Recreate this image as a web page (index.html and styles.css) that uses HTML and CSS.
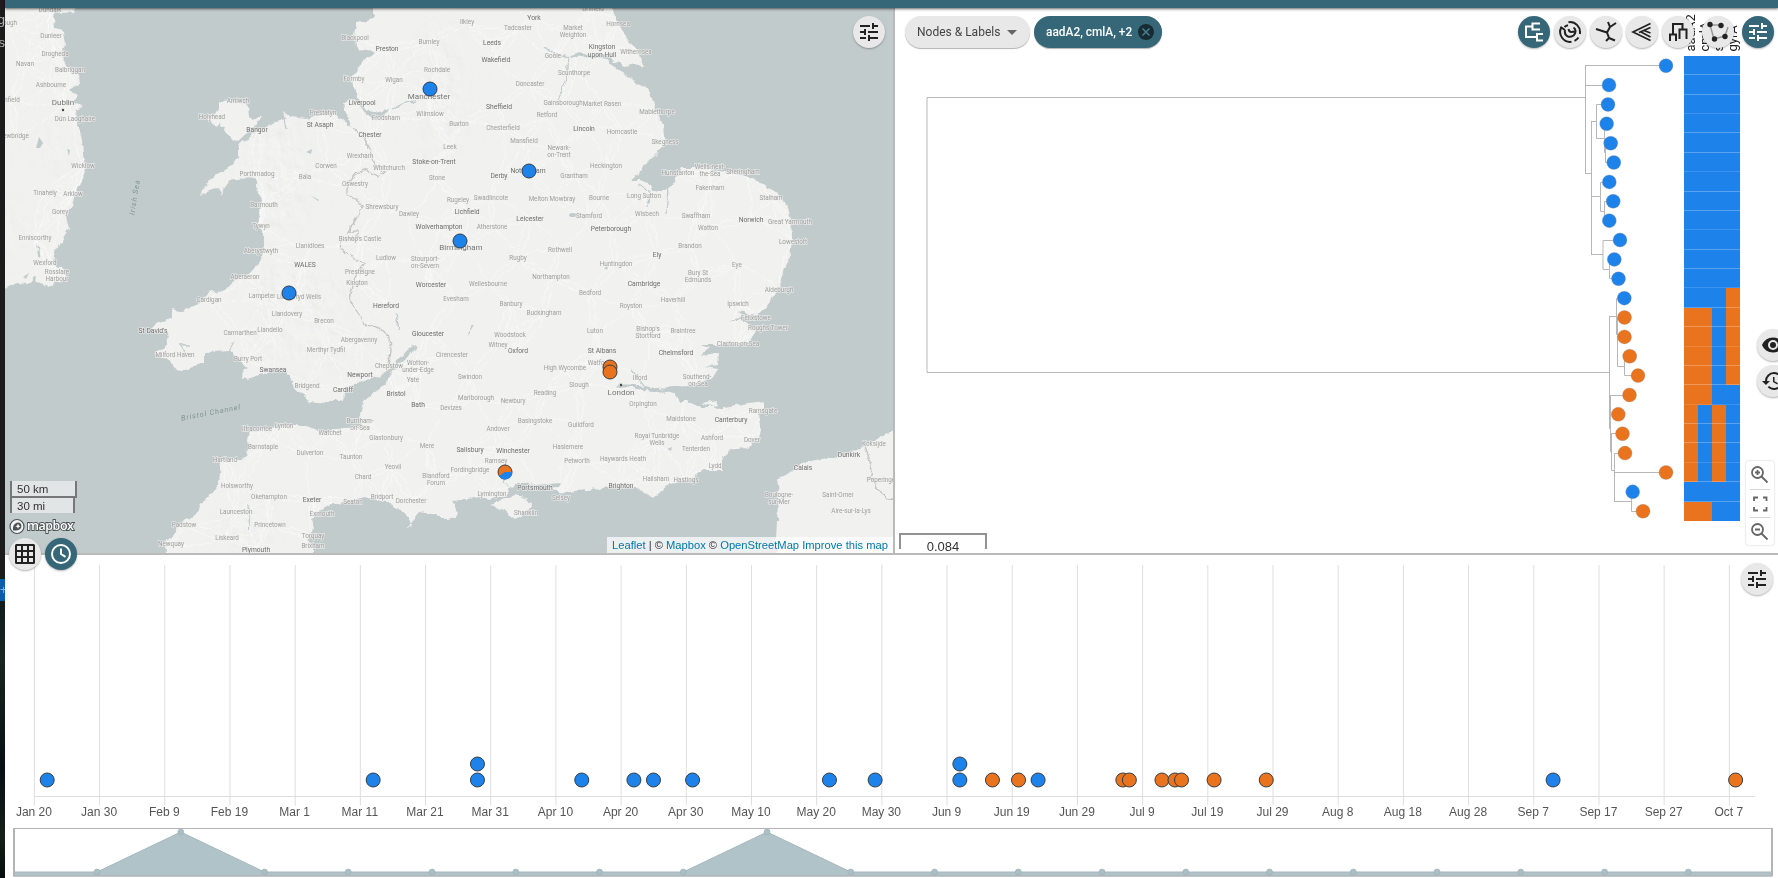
FILE: index.html
```html
<!DOCTYPE html>
<html lang="en">
<head>
<meta charset="utf-8">
<title>Map, tree and timeline</title>
<link rel="stylesheet" href="styles.css">
</head>
<body>
<svg class="defs" width="0" height="0">
  <symbol id="tune" viewBox="0 0 24 24"><path d="M3 17v2h6v-2H3zM3 5v2h10V5H3zm10 16v-2h8v-2h-8v-2h-2v6h2zM7 9v2H3v2h4v2h2V9H7zm14 4v-2H11v2h10zm-6-4h2V7h4V5h-4V3h-2v6z"/></symbol>
</svg>
<div class="screen">
  <aside class="desktop"><span class="bit">ng</span><span class="bit">es</span><i class="accent">+</i><i class="forest"></i></aside>
  <main class="app">
    <header class="topbar"></header>
    <section class="upper">
      <div class="map">
        <svg id="map" class="canvas" viewBox="5 8 888 545" width="888" height="545">
          <defs>
            <filter id="coast" x="0" y="0" width="100%" height="100%"><feTurbulence type="fractalNoise" baseFrequency=".13" numOctaves="3" seed="4"/><feDisplacementMap in="SourceGraphic" scale="6" xChannelSelector="R" yChannelSelector="G"/></filter>
            <filter id="relief" x="0" y="0" width="100%" height="100%"><feTurbulence type="fractalNoise" baseFrequency=".06" numOctaves="4" seed="9"/><feDiffuseLighting surfaceScale="2.2" lighting-color="#fff"><feDistantLight azimuth="135" elevation="62"/></feDiffuseLighting><feComposite in2="SourceAlpha" operator="in"/></filter>
            <filter id="soft"><feGaussianBlur stdDeviation="13"/></filter>
            <clipPath id="onland"><use href="#gb"/><use href="#ireland"/></clipPath>
            <mask id="hills"><g fill="#fff" filter="url(#soft)"><ellipse cx="275" cy="175" rx="32" ry="65"/><ellipse cx="295" cy="290" rx="55" ry="25"/><ellipse cx="310" cy="345" rx="45" ry="22"/><ellipse cx="52" cy="150" rx="14" ry="24"/><ellipse cx="440" cy="90" rx="22" ry="70"/><ellipse cx="250" cy="530" rx="35" ry="16"/><ellipse cx="10" cy="225" rx="14" ry="25"/></g></mask>
          </defs>
          <rect x="5" y="8" width="888" height="545" fill="#c2cbcc"/>
          <g fill="#f1f1f0" filter="url(#coast)">
            <path id="ireland" d="M0 0H74L76 12 62 13 53 10 55 28 64 30 66 45 62 50 66 66 78 75 79 85 70 88 77 95 74 103 81 106 76 109 77 125 82 140 83 155 86 170 80 185 75 195 71 207 66 218 69 228 62 240 54 255 53 264 62 268 67 279 50 286 40 283 34 277 28 284 17 283 0 291Z"/>
            <path id="gb" d="M373 0V12L375 17 366 20 357 22 354 35 355 45 361 51 372 50 376 52 367 58 357 68 351 80 355 90 358 97 365 108 373 113 388 110 385 115 374 119 368 115 360 106 354 99 343 104 347 115 352 127 359 132 350 125 335 114 318 116 306 118 290 116 283 112 285 119 270 124 262 128 255 132 249 138 242 142 238 147 238 158 225 170 213 177 203 190 200 195 212 190 219 189 222 195 226 184 235 179 256 178 259 182 256 190 262 200 260 212 257 225 264 232 264 248 260 262 250 273 235 280 226 290 208 293 197 305 187 308 185 312 172 309 170 318 155 325 150 330 167 332 169 342 164 348 155 353 163 358 172 361 174 369 185 370 195 366 205 363 205 354 212 351 230 350 236 355 243 364 248 368 243 370 242 377 247 379 260 375 271 372 285 371 292 382 294 388 303 395 308 401 325 403 343 399 344 392 352 386 360 382 375 378 390 369 395 362 410 348 416 345 413 352 405 358 398 364 392 372 385 385 375 392 363 402 360 415 362 426 345 427 325 432 305 426 290 426 270 428 250 432 248 440 250 447 246 455 240 460 225 458 220 462 218 485 212 493 200 506 196 516 185 520 178 526 174 535 164 543 165 553V570H313V545L308 538 314 528 312 520 320 510 332 504 352 500 365 497 385 502 400 510 409 518 411 525 407 528 413 520 420 512 437 515 446 519 456 517 457 508 453 501 468 499 480 497 490 499 506 495 510 488 503 481 513 489 516 483 525 483 540 487 557 490 560 494 575 491 600 489 612 486 635 487 645 493 655 497 670 483 690 480 702 470 722 470 722 460 730 450 745 448 758 440 761 430 758 415 764 408 764 402 742 405 718 409 702 403 717 400 719 405 710 407 697 407 687 400 680 403 674 393 658 388 673 387 690 386 700 383 710 378 719 369 704 367 718 366 719 352 700 356 710 348 700 345 720 345 735 343 748 342 756 331 745 321 730 321 745 318 738 311 750 314 757 315 765 308 775 295 781 280 784 268 790 255 792 240 791 220 787 205 777 193 760 182 745 176 725 171 700 168 682 168 676 177 674 185 665 191 652 191 650 184 640 180 631 180 638 175 645 165 655 155 664 147 664 135 663 125 655 108 650 92 643 87 635 83 627 75 617 70 609 60 600 57 585 57 575 56 570 58 576 53 590 55 606 54 613 62 625 66 634 63 645 68 640 55 630 42 622 30 615 18 613 0Z"/>
            <path d="M218 103 228 100 240 102 248 105 249 117 252 120 263 116 258 124 250 128 246 135 238 142 232 138 226 133 220 124 215 126 212 122 205 117 214 116 218 108ZM491 505 502 499 515 494 524 499 533 502 532 507 520 516 515 519 505 512ZM900 426 884 436 865 446 840 456 810 461 798 465 790 473 777 479 779 492 777 520 776 540 777 570H900Z"/>
          </g>
          <g clip-path="url(#onland)"><g mask="url(#hills)"><rect x="5" y="8" width="888" height="545" filter="url(#relief)" class="relief"/></g></g>
          <g clip-path="url(#onland)"><g id="roads" class="roads" filter="url(#coast)"></g></g>
          <g class="rivers" filter="url(#coast)"><path d="M569 57 568 68 565 82 561 93 558 100M570 58 555 54 545 47M632 370 645 388 660 392 672 388M638 185 649 190 648 207M668 188 666 215M390 111 405 103 416 101M504 481 507 476 515 473M399 330 396 312M249 504 250 518 248 530M36 240 39 258M474 325 468 336M284 118 286 130M230 350 234 342M186 354 180 345 190 345"/></g>
          <g class="wide" filter="url(#coast)"><path d="M571 57 577 54 586 57 604 56 611 60 619 69M617 386 632 386 645 389 660 392 673 389"/></g>
          <g class="border" filter="url(#coast)"><path d="M353 128 364 138 372 153 375 165 385 172 379 177 367 169 356 173 347 184 347 194 363 205 355 220 348 234 357 230 357 238 342 240 340 248 352 258 364 263 354 280 350 300 365 325 380 328 390 337 391 350 389 366M865 446 869 458 872 470 870 478 878 488 887 499 893 500"/></g>
          <g class="lakes"><ellipse cx="573" cy="215" rx="4" ry="2"/><path d="m36 148 3-11 4 6-3 5zM67 149l3 1-1 6zM306 152l6-3-1 5zM300 182l6-9 0 2zM310 195l9 5-1 1zM535 485l26-2-2 4-22 1zM23 277l6-4-3 6zM604 268l4-2-1 4zM667 449l5-2-1 4z"/></g>
          <g id="labels"></g>
          <text class="sea" transform="translate(137 198) rotate(-81)" text-anchor="middle" textLength="35">Irish Sea</text>
          <text class="sea" transform="translate(211 415) rotate(-11)" text-anchor="middle" textLength="60">Bristol Channel</text>
          <circle cx="63" cy="110" r="1.2" fill="#444"/><circle cx="621" cy="385" r="1.2" fill="#444"/>
          <g class="mark"><circle cx="430" cy="89" r="7"/><circle cx="529" cy="171" r="7"/><circle cx="460" cy="241" r="7"/><circle cx="289" cy="293" r="7"/><circle class="o" cx="610" cy="367" r="7"/><circle class="o" cx="610" cy="372" r="7"/><circle class="o" cx="505" cy="472" r="7"/><path class="pie" d="M505 472 499 476A7 7 0 0 0 512 472Z"/></g>
        </svg>
        <button class="round map-tune"><svg width="24" height="24"><use href="#tune"/></svg></button>
        <div class="scales"><span class="km">50 km</span><span class="mi">30 mi</span></div>
        <div class="logo"><svg width="66" height="17" viewBox="0 0 66 17"><circle cx="8" cy="8.5" r="7" fill="#fff" fill-opacity=".8" stroke="#4b5253" stroke-width="1.2"/><path d="M4.3 12.5C3 8 6 4.2 9.5 4.5 13 5 13.500 9.500 10.500 11.500 8.500 12.800 6 12.600 4.300 12.500Z" fill="#4b5253"/><path d="m9 5.600.8 1.800 1.800.8-1.800.8L9 10.800l-.8-1.800-1.800-.8 1.800-.8z" fill="#fff"/><text x="18" y="12" textLength="47">mapbox</text></svg></div>
        <div class="credit"><a>Leaflet</a> | © <a>Mapbox</a> © <a>OpenStreetMap</a> <a>Improve this map</a></div>
      </div>
      <div class="tree">
        <svg id="tree" class="canvas" viewBox="895 8 883 545" width="883" height="545">
          <path class="branches" d="M927 97.500V372.500M927 97.500H1585.500M927 372.500H1609M1585.500 65.500V173.500M1585 65.500H1660M1585 85.500H1605M1585 173.500H1591.500M1591.500 121.500V254.500M1591 121.500H1596.500V104.500H1605M1596.500 121.500V138.500H1604.500V124M1604.500 138.500V152.500H1605.500V143V162.500H1610M1591 196.500H1600.500V182.500H1605M1600.500 196.500V211.500H1604.500V201.500H1608M1604.500 211.500V220M1591 254.500H1603V240.500H1615M1603 254.500V269.500H1609.500V259M1609.500 269.500V278.500H1614M1609.500 316.500V428.500M1609 316.500H1616.500V298.500H1620M1616.500 316V334.500H1617.500V317.500V366.500H1624.500V355M1624.500 366V375.500H1633M1609.500 428.500H1610.500M1610.500 395.500V451.500H1611.500V434M1610 395.500H1625M1611.500 451V470.500H1614.500M1611 433.500H1618M1614.500 453.500V501.500M1614 453.500H1620M1614 472.500H1660M1614 501.500H1631.500V492M1631.500 501V511.500H1638"/>
          <g id="leaves"></g><g id="heat"></g>
          <g class="genes"><text transform="translate(1694.500 51.500) rotate(-90)">aadA2</text><text transform="translate(1708.500 51.500) rotate(-90)">cmlA</text><text transform="translate(1722.500 51.500) rotate(-90)">sul3</text><text transform="translate(1737 51.500) rotate(-90)">gyrA</text></g>
          <path d="M900 549V534H986V549" fill="none" stroke="#929292" stroke-width="2"/>
          <text x="943" y="551" text-anchor="middle" class="sv">0.084</text>
        </svg>
        <nav class="bar">
          <button class="chip">Nodes &amp; Labels <svg width="10" height="5"><path d="M0 0H10L5 5Z" fill="#666"/></svg></button>
          <button class="chip dark">aadA2, cmlA, +2 <svg width="16" height="16"><circle cx="8" cy="8" r="8" fill="#172b33"/><path d="m4.500 4.500 7 7m0-7-7 7" stroke="#4b7f90" stroke-width="1.500"/></svg></button>
          <span class="grow"></span>
          <button class="round dark"><svg width="24" height="24"><path class="ln" d="M10.500 6.500H4V17H12M18 3.500H10.500V9.500H18M21 14H15V20.500H21M12 17H15"/></svg></button>
          <button class="round"><svg width="24" height="24"><path class="ln" d="M10.500 2.200A10 10 0 0 1 21.800 14M20.500 17.500A10 10 0 0 1 16.500 20.800M13.500 21.800A10 10 0 0 1 3.200 7.500L7 10M6.500 7A7 7 0 0 1 10 5.200M7 10C6 16 11 18.500 15.500 15.500C18.500 13 18 9 15.500 7.500M10.500 9C11 12 13 12.500 16.500 11.500"/></svg></button>
          <button class="round"><svg width="24" height="24"><path class="ln" d="M2 9 13 12.500 16 7 14 2M16 7 22 3M13 12.500 15 18 12 21M15 18 21 20.500"/></svg></button>
          <button class="round"><svg width="24" height="24"><path class="ln thin" d="M20.500 3.500 3 12 20.500 20.500M9 12.500 20.500 7.500M14 10.500 20.500 13M11 12 20.500 17"/></svg></button>
          <button class="round"><svg width="24" height="24"><path class="ln" d="M4 21V14.500H10V21M7 14.500V4H16.500V9.500M13.500 19V9.500H20.500V19"/></svg></button>
          <button class="round gap"><svg width="24" height="24"><path d="M4 5 15 5M19 16 8 19 4 5M19 16 22 7" fill="none" stroke="#999" stroke-width="1.500"/><g fill="#222"><circle cx="4" cy="4.500" r="2.700"/><circle cx="15" cy="5.500" r="2.700"/><circle cx="8.500" cy="19" r="2.700"/><circle cx="19" cy="16.500" r="2.700"/></g></svg></button>
          <button class="round dark gap last"><svg width="24" height="24"><use href="#tune"/></svg></button>
        </nav>
        <div class="side"><button class="round"><svg width="24" height="24"><path d="M12 4.500C7 4.500 2.700 7.600 1 12c1.700 4.400 6 7.500 11 7.500s9.300-3.100 11-7.500c-1.700-4.400-6-7.500-11-7.500zM12 17a5 5 0 1 1 0-10 5 5 0 0 1 0 10zm0-8a3 3 0 1 0 0 6 3 3 0 0 0 0-6z"/></svg></button><button class="round"><svg width="24" height="24"><path d="M13 3a9 9 0 0 0-9 9H1l3.900 3.900L9 12H6a7 7 0 1 1 2.060 4.940l-1.420 1.420A9 9 0 1 0 13 3zm-1 5v5l4.280 2.540.72-1.210-3.500-2.080V8H12z"/></svg></button></div>
        <div class="zoom">
          <span><svg width="20" height="20"><circle cx="7.500" cy="7.500" r="5.500"/><path d="m11.500 11.500 6 6M5 7.500h5M7.500 5v5"/></svg></span>
          <span><svg width="20" height="20"><path d="M4 7V3.500H8M13 3.500H16.500V7M16.500 13V16.500H13M8 16.500H4V13"/></svg></span>
          <span><svg width="20" height="20"><circle cx="7.500" cy="7.500" r="5.500"/><path d="m11.500 11.500 6 6M5 7.500h5"/></svg></span>
        </div>
      </div>
    </section>
    <section class="timeline">
      <svg id="time" class="canvas" viewBox="5 555 1773 323" width="1773" height="323"></svg>
      <div class="tabs"><button class="round"><svg width="24" height="24"><path fill-rule="evenodd" d="M3.500 2H20.500Q22 2 22 3.500V20.500Q22 22 20.500 22H3.500Q2 22 2 20.500V3.500Q2 2 3.500 2ZM4 4V8H8V4ZM10 4V8H14V4ZM16 4V8H20V4ZM4 10V14H8V10ZM10 10V14H14V10ZM16 10V14H20V10ZM4 16V20H8V16ZM10 16V20H14V16ZM16 16V20H20V16Z"/></svg></button><button class="round dark"><svg width="24" height="24"><circle class="ln" cx="12" cy="12" r="9"/><path class="ln" d="M12 6.500V12L16.500 14.800"/></svg></button></div>
      <button class="round time-tune"><svg width="24" height="24"><use href="#tune"/></svg></button>
    </section>
  </main>
</div>
<script src="app.js"></script>
</body>
</html>
```
FILE: styles.css
```css
* { box-sizing: border-box; }
body { margin: 0; overflow: hidden; font-family: Roboto, "Liberation Sans", sans-serif; background: #fff; }
.defs { position: absolute; }
.screen { display: flex; width: 1778px; height: 878px; }
.desktop { width: 5px; flex: none; background: #1c1c1c; overflow: hidden; display: flex; flex-direction: column; align-items: flex-end; padding-top: 10px; color: #b5b5b5; }
.bit { font: 13px/20px "Liberation Sans", sans-serif; height: 23px; flex: none; }
.accent { margin-top: 523px; width: 5px; height: 22px; flex: none; background: #0b5cad; color: #7cb5ea; font: 12px/22px "Liberation Sans", sans-serif; overflow: hidden; }
.forest { width: 5px; flex: 1; background: linear-gradient(#101c1d, #1a2420 20%, #111b19 40%, #070f14 60%, #161f18 85%, #070d0c); }
.app { flex: 1; display: flex; flex-direction: column; min-width: 0; }
.topbar { height: 8px; flex: none; background: #356778; box-shadow: 0 1px 3px rgba(0,0,0,.6); position: relative; z-index: 3; }
.upper { display: grid; grid-template-columns: 890px 1fr; height: 547px; flex: none; border-bottom: 2px solid #bababa; }
.map, .tree, .timeline { position: relative; }
.map { border-right: 2px solid #bababa; }
.tree { overflow: hidden; }
.canvas { display: block; }
.timeline { height: 323px; }
button { border: 0; margin: 0; padding: 0; font: inherit; }
.round { width: 32px; height: 32px; flex: none; border-radius: 50%; background: #e8e8e8; display: flex; align-items: center; justify-content: center; fill: #212121; box-shadow: 0 1px 2px rgba(0,0,0,.3); }
.round .ln { fill: none; stroke: #212121; stroke-width: 2; }
.round .thin { stroke-width: 1.700; }
.round.dark { background: #356778; fill: #fff; }
.round.dark .ln { stroke: #fff; }
.map-tune { position: absolute; left: 848px; top: 8px; }
.scales { position: absolute; left: 5px; top: 473px; display: flex; flex-direction: column; align-items: flex-start; font: 11.500px/14px "Liberation Sans", sans-serif; color: #333; }
.scales span { border: 2px solid #777; background: rgba(255,255,255,.5); padding: 1px 5px 0; height: 17px; }
.km { width: 67px; border-top: 0 !important; }
.mi { width: 65px; border-top: 0 !important; border-bottom: 0 !important; height: 15px !important; }
.logo { position: absolute; left: 4px; top: 510px; }
.logo text { font: 600 12.500px "Open Sans", sans-serif; fill: #fff; stroke: #4b5253; stroke-width: 1.800px; paint-order: stroke; }
.credit { position: absolute; right: 0; bottom: 0; height: 16px; width: 286px; padding-left: 5px; background: rgba(255,255,255,.7); font: 11.180px/17px "Liberation Sans", sans-serif; color: #333; white-space: nowrap; }
.credit a { color: #0078a8; }
.roads { fill: none; stroke: #f9f9f9; stroke-width: .8; }
.relief { mix-blend-mode: multiply; opacity: .25; }
.rivers { fill: none; stroke: #c2cbcc; stroke-width: 1.300; }
.wide { fill: none; stroke: #c2cbcc; stroke-width: 3; }
.lakes { fill: #c2cbcc; }
.border { fill: none; stroke: #c4c4c4; stroke-width: 1.300; }
.town, .city, .capital { text-anchor: middle; paint-order: stroke; stroke: #f0f0ef; stroke-width: 1.400px; stroke-opacity: .75; }
.town { font-size: 6.300px; fill: #9f9f9f; }
.city { font-size: 6.700px; fill: #6f6f6f; }
.capital { font-size: 8px; fill: #777; }
.sea { font-size: 7.300px; font-style: italic; fill: #7f9392; }
.mark circle, .ev { fill: #1e82eb; stroke: #353d45; stroke-width: 1; }
.mark .o, .ev.o { fill: #ea731d; }
.pie { fill: #1e82eb; }
.branches { fill: none; stroke: #b7b7b7; stroke-width: 1; }
.genes text { font-size: 13px; fill: #222; }
.sv { font: 13px "Liberation Sans", sans-serif; fill: #333; }
.bar { position: absolute; left: 10px; right: 4px; top: 8px; display: flex; gap: 4px; }
.chip { height: 32px; width: 125px; border-radius: 16px; background: #e8e8e8; color: #444; font-size: 12px; display: flex; align-items: center; justify-content: space-between; padding: 0 13px 0 12px; box-shadow: 0 1px 1px rgba(0,0,0,.3); }
.chip.dark { width: 128px; background: #356778; color: #fff; font-weight: 500; font-size: 11.900px; padding: 0 8px 0 12px; }
.grow { flex: 1; }
.gap { margin-left: 4px; }
.side { position: absolute; left: 862px; top: 321px; display: flex; flex-direction: column; gap: 4px; }
.zoom { position: absolute; left: 851px; top: 453px; width: 28px; height: 84px; background: #fff; border-radius: 3px; box-shadow: 0 0 2px rgba(0,0,0,.25); display: grid; grid-template-rows: repeat(3, 1fr); padding: 0 4px; }
.zoom span { display: grid; place-items: center; }
.zoom span + span { border-top: 1px solid #d5d5d5; }
.zoom svg { fill: none; stroke: #666; stroke-width: 1.800; }
.tabs { position: absolute; left: 4px; top: -17px; display: flex; gap: 4px; }
.time-tune { position: absolute; left: 1736px; top: 8px; }
.grid { stroke: #dedede; stroke-width: 1; }
.tick { font: 12px "Liberation Sans", sans-serif; fill: #555; text-anchor: middle; }
.area { fill: #b0c3c9; stroke: #a5b8be; }
.knot { fill: #a9bec5; stroke: #99adb4; stroke-width: .5; }
```
FILE: app.js
```js
const BLUE = '#1e82eb', ORANGE = '#ea731d';
const $ = id => document.getElementById(id);

// name, x, y of the label's centre
const towns = `Dundalk,50,10|ough,10,23|Dunleer,51,36|Drogheda,55,54|Navan,25,64|Balbriggan,70,70|Ashbourne,51,85|nfield,12,100|Dún Laoghaire,75,119|ewbridge,16,136|Wicklow,83,166|Tinahely,45,193|Arklow,73,194|Gorey,60,212|Enniscorthy,35,238|Wexford,45,263|Rosslare,57,272|Harbour,57,279|Amlwch,238,101|Holyhead,212,117|Prestatyn,323,113|Porthmadog,257,174|Corwen,326,166|Bala,305,177|Barmouth,264,205|Tywyn,261,226|Aberystwyth,261,251|Llanidloes,310,246|Blackpool,355,38|Burnley,429,42|Rochdale,437,70|Formby,354,79|Wigan,394,80|Frodsham,386,118|Wilmslow,430,114|Wrexham,360,156|Whitchurch,389,168|Leek,450,147|Stone,437,178|Oswestry,355,184|Shrewsbury,382,207|Dawley,409,214|Bishop's Castle,360,239|Ludlow,386,258|Stourport-,425,259|on-Severn,425,266|Presteigne,360,272|Ilkley,467,22|Driffield,593,9|Tadcaster,518,28|Market,573,28|Weighton,573,35|Hornsea,618,24|Withernsea,636,52|Goole,553,56|Scunthorpe,574,73|Doncaster,530,84|Gainsborough,563,103|Market Rasen,602,104|Mablethorpe,657,112|Retford,547,115|Buxton,459,124|Chesterfield,503,128|Horncastle,622,132|Mansfield,524,141|Skegness,665,142|Newark-,559,148|on-Trent,559,155|Heckington,606,166|Grantham,574,176|Hunstanton,678,173|Wells-next-,710,167|the-Sea,710,174|Sheringham,743,172|Fakenham,710,188|Long Sutton,644,196|Swadlincote,491,198|Rugeley,458,200|Melton Mowbray,552,199|Bourne,599,198|Stalham,771,198|Wisbech,647,214|Stamford,589,216|Swaffham,696,216|Great Yarmouth,790,222|Atherstone,492,227|Watton,708,228|Lowestoft,793,242|Brandon,690,246|Rothwell,560,250|Rugby,518,258|Huntingdon,616,264|Eye,737,265|Bury St,698,273|Edmunds,698,280|Northampton,551,277|Aberaeron,245,277|Cardigan,209,300|Lampeter,262,296|Llanwrtyd Wells,299,297|Kington,357,283|Llandovery,287,314|Brecon,324,321|Llandeilo,270,330|Carmarthen,240,333|Abergavenny,359,340|Merthyr Tydfil,326,350|Milford Haven,175,355|Burry Port,248,359|Chepstow,389,366|Wotton-,418,363|under-Edge,418,370|Yate,413,380|Bridgend,307,386|Cirencester,452,355|Evesham,456,299|Burnham-,360,421|on-Sea,360,428|Ilfracombe,257,429|Lynton,284,426|Watchet,330,433|Barnstaple,263,447|Glastonbury,386,438|Mere,427,446|Dulverton,310,453|Taunton,351,457|Hartland,225,460|Yeovil,393,467|Chard,363,477|Blandford,436,476|Forum,436,483|Holsworthy,237,486|Okehampton,269,497|Seaton,353,502|Bridport,382,497|Dorchester,411,501|Launceston,236,512|Exmouth,322,514|Padstow,184,525|Princetown,270,525|Liskeard,227,538|Torquay,313,536|Brixham,313,546|Newquay,171,544|Wellesbourne,488,284|Bedford,590,293|Haverhill,673,300|Banbury,511,304|Royston,631,306|Buckingham,544,313|Ipswich,738,304|Aldeburgh,779,290|Felixstowe,756,318|Roughs Tower,768,328|Clacton-on-Sea,738,344|Luton,595,331|Bishop's,648,329|Stortford,648,336|Braintree,683,331|Woodstock,510,335|Witney,498,345|Watford,599,363|High Wycombe,565,368|Swindon,470,377|Slough,579,385|Ilford,640,378|Southend-,697,377|on-Sea,698,384|Reading,545,393|Marlborough,476,398|Newbury,513,401|Devizes,451,408|Orpington,643,404|Ramsgate,763,411|Basingstoke,535,421|Guildford,581,425|Maidstone,681,419|Andover,498,429|Royal Tunbridge,657,436|Wells,657,443|Ashford,712,438|Dover,752,440|Haslemere,568,447|Tenterden,696,449|Ramsey,496,461|Petworth,577,461|Haywards Heath,623,459|Fordingbridge,470,470|Lydd,715,466|Hailsham,656,479|Hastings,686,480|Lymington,492,494|Selsey,561,498|Shanklin,526,513|Boulogne-,779,495|sur-Mer,779,502|Saint-Omer,838,495|Aire-sur-la-Lys,851,511|Koksijde,874,444|Poperinge,881,480`;
const cities = `Preston,387,48|Liverpool,362,102|Bangor,257,129|St Asaph,320,124|Chester,370,134|Stoke-on-Trent,434,161|Wolverhampton,439,226|York,534,17|Leeds,492,42|Wakefield,496,59|Kingston,602,46|upon Hull,602,54|Sheffield,499,106|Lincoln,584,128|Derby,499,175|Nottingham,528,170|Lichfield,467,211|Leicester,530,218|Peterborough,611,228|Norwich,751,219|Ely,657,254|Worcester,431,284|Hereford,386,305|Gloucester,428,333|St David's,153,330|Swansea,273,369|Newport,360,374|Cardiff,343,389|Bristol,396,393|Bath,418,404|Exeter,312,499|Plymouth,256,549|Cambridge,644,283|Oxford,518,350|St Albans,602,350|Chelmsford,676,352|Canterbury,731,419|Salisbury,470,449|Winchester,513,450|Brighton,621,485|Portsmouth,535,487|Dunkirk,849,454|Calais,803,467|WALES,305,264`;
const capitals = `Dublin,63,102|Manchester,429,96|Birmingham,461,247|London,621,392`;
const parse = s => s.split('|').map(r => { const [n, x, y] = r.split(','); return { n, x: +x, y: +y }; });
const label = (list, cls, dy) => list.map(p => `<text class="${cls}" x="${p.x}" y="${p.y + dy}">${p.n}</text>`).join('');
const T = parse(towns), C = parse(cities), K = parse(capitals);
$('labels').innerHTML = label(T, 'town', 2.2) + label(C, 'city', 2.5) + label(K, 'capital', 3);

// Roads join every place to its nearest neighbours.
const all = [...T, ...C, ...K];
let roads = '';
all.forEach(a => all.filter(b => b !== a).map(b => ({ b, d: Math.hypot(a.x - b.x, a.y - b.y) }))
  .sort((p, q) => p.d - q.d).slice(0, 4)
  .forEach(({ b, d }) => { if (d > 10 && d < 60) roads += `M${a.x} ${a.y}Q${(a.x + b.x) / 2 + (a.y - b.y) / 6} ${(a.y + b.y) / 2 + (b.x - a.x) / 7} ${b.x} ${b.y}`; }));
$('roads').innerHTML = `<path d="${roads}"/>`;

// Tree leaves and the gene matrix beside them.
const step = 19.37;
const xs = [1666, 1609, 1608, 1606.700, 1610.700, 1613.800, 1609.300, 1613.200, 1609.300, 1620, 1614.300, 1618.500, 1624.300, 1624.500, 1624.500, 1629.700, 1638, 1629.500, 1618.300, 1622.500, 1625, 1666, 1632.700, 1643];
$('leaves').innerHTML = xs.map((x, i) => `<circle cx="${x}" cy="${65.7 + i * step}" r="7" fill="${i < 13 || i === 22 ? BLUE : ORANGE}" stroke="#8a8a8a" stroke-width=".3"/>`).join('');
const rows = [...Array(12).fill('BBBB'), 'BBBO', ...Array(4).fill('OOBO'), 'OOBB', ...Array(4).fill('OBOB'), 'BBBB', 'OOBB'];
$('heat').innerHTML = rows.map((r, i) => [...r].map((c, j) => `<rect x="${1684 + j * 14}" y="${Math.round(56 + i * step)}" width="14" height="${Math.round(56 + (i + 1) * step) - Math.round(56 + i * step)}" fill="${c === 'B' ? BLUE : ORANGE}"/>`).join('')).join('')
  + rows.slice(1).map((r, i) => `<path d="M1684 ${Math.round(56 + (i + 1) * step) - .5}h56" stroke="#fff" stroke-opacity="${i % 3 === 2 ? .14 : .26}"/>`).join('');

// Timeline, one event per [days since Jan 22, orange, level].
const days = 'Jan 20,Jan 30,Feb 9,Feb 19,Mar 1,Mar 11,Mar 21,Mar 31,Apr 10,Apr 20,Apr 30,May 10,May 20,May 30,Jun 9,Jun 19,Jun 29,Jul 9,Jul 19,Jul 29,Aug 8,Aug 18,Aug 28,Sep 7,Sep 17,Sep 27,Oct 7'.split(',');
const events = [[0], [50], [66], [66, 0, 1], [82], [90], [93], [99], [120], [127], [140], [140, 0, 1], [145, 1], [149, 1], [152], [165, 1], [166, 1], [171, 1], [173, 1], [174, 1], [179, 1], [187, 1], [231], [259, 1]];
let out = '';
days.forEach((d, i) => { const x = 34.4 + i * 65.19; out += `<path class="grid" d="M${x} 565V805.5"/><text class="tick" x="${x - .5}" y="816">${d}</text>`; });
out += '<path class="grid" d="M34 796.5H1755"/>';
events.forEach(([d, o, l]) => out += `<circle class="ev${o ? ' o' : ''}" cx="${47.2 + d * 6.519}" cy="${l ? 764 : 780}" r="7"/>`);
const knots = [...Array(22)].map((_, i) => [13.3 + i * 83.75, i === 2 || i === 9 ? 832 : 872]);
out += `<path class="area" d="M14 876L${knots.map(k => k.join(' ')).join('L')}L1772 876Z"/>`;
out += knots.slice(1, -1).map(k => `<circle class="knot" cx="${k[0]}" cy="${k[1]}" r="3"/>`).join('');
out += '<path d="M13 828.5H1773M13 876H1773" stroke="#b4b4b4" fill="none"/><path d="M14 828V876M1772 828V876" stroke="#b4b4b4" stroke-width="2"/>';
$('time').innerHTML = out;
```
